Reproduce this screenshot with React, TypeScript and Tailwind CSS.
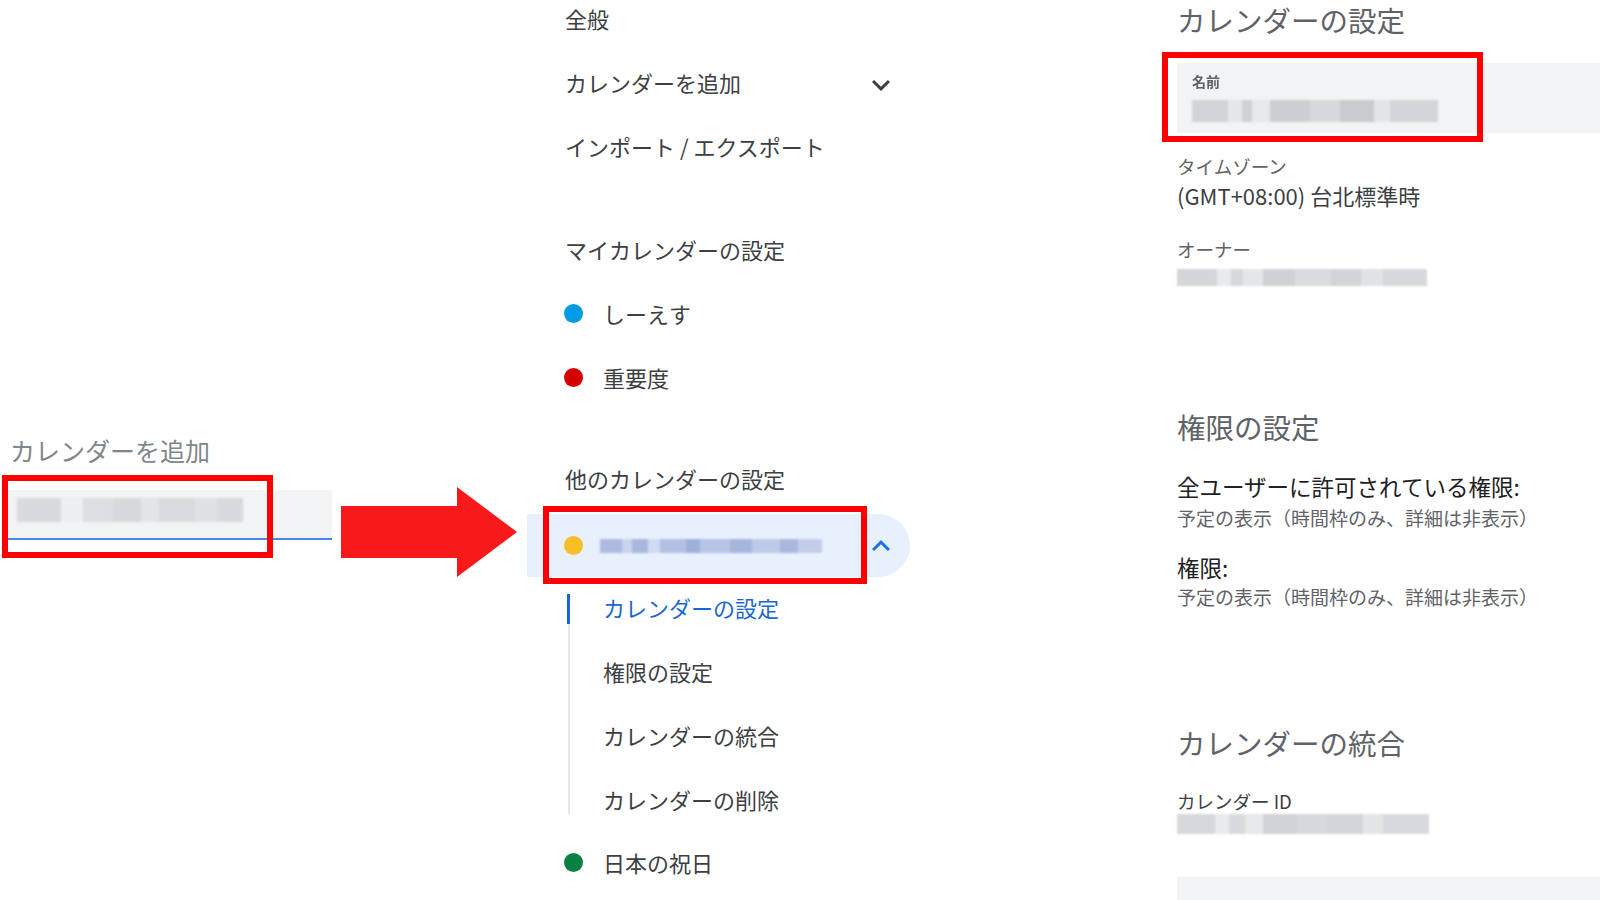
import React from "react";

type Seg = [number, string];

const Mosaic = ({ segs, h, className = "" }: { segs: Seg[]; h: number; className?: string }) => (
  <div className={"flex blur-[1px] " + className}>
    {segs.map(([w, c], i) => (
      <div key={i} style={{ width: w, height: h, background: c }} />
    ))}
  </div>
);

const ChevronDown = ({ color }: { color: string }) => (
  <svg width="36" height="36" viewBox="0 0 24 24">
    <path d="M16.59 8.59L12 13.17 7.41 8.59 6 10l6 6 6-6z" fill={color} />
  </svg>
);

const ChevronUp = ({ color }: { color: string }) => (
  <svg width="36" height="36" viewBox="0 0 24 24">
    <path d="M12 8l-6 6 1.41 1.41L12 10.83l4.59 4.58L18 14z" fill={color} />
  </svg>
);

const Row = ({ children, className = "" }: { children: React.ReactNode; className?: string }) => (
  <div className={"h-[64px] flex items-center shrink-0 " + className}>{children}</div>
);

const DotRow = ({ color, label, className = "" }: { color: string; label: string; className?: string }) => (
  <Row className={"pl-[37px] gap-[20px] " + className}>
    <div className={"w-[19px] h-[19px] rounded-full " + color} />
    <span>{label}</span>
  </Row>
);

export default function App() {
  return (
    <div className="w-[1600px] h-[900px] bg-white flex overflow-hidden font-['Noto_Sans_CJK_JP','Noto_Sans',sans-serif]">
      {/* Left: add calendar field */}
      <div className="w-[332px] shrink-0 pt-[434px]">
        <div className="pl-[10px] text-[25px] leading-[32px] text-[#80868b]">カレンダーを追加</div>
        <div className="relative ml-[7px] mt-[24px] w-[325px] h-[50px] bg-[#f1f3f4] border-b-2 border-[#4a86e8] pt-[8px] pl-[10px]">
          <Mosaic
            h={24}
            segs={[
              [44, "#d8dadd"],
              [22, "#eceef0"],
              [30, "#dcdee1"],
              [28, "#d6d8db"],
              [18, "#e2e4e6"],
              [36, "#d9dbde"],
              [22, "#dfe1e3"],
              [26, "#d8dadd"],
            ]}
          />
          <div className="absolute left-[-5px] top-[-15px] w-[271px] h-[83px] border-[6px] border-[#ff0000]" />
        </div>
      </div>

      {/* Arrow */}
      <div className="ml-[9px] mt-[487px] shrink-0 self-start">
        <svg width="176" height="90" viewBox="0 0 176 90">
          <polygon points="0,19 116,19 116,0 176,45 116,90 116,71 0,71" fill="#f81a1a" />
        </svg>
      </div>

      {/* Nav */}
      <div className="ml-[10px] w-[383px] shrink-0 -mt-[14px] flex flex-col text-[22px] leading-[30px] text-[#3c4043]">
        <Row className="pl-[38px]">全般</Row>
        <Row className="pl-[38px] justify-between pr-[11px]">
          <span>カレンダーを追加</span>
          <div className="mt-[5px]">
            <ChevronDown color="#3c4043" />
          </div>
        </Row>
        <Row className="pl-[38px]">インポート / エクスポート</Row>

        <Row className="pl-[38px] mt-[39px]">マイカレンダーの設定</Row>
        <DotRow color="bg-[#039be5]" label="しーえす" />
        <DotRow color="bg-[#d50000]" label="重要度" />

        <Row className="pl-[38px] mt-[37px]">他のカレンダーの設定</Row>
        <div className="relative mt-[4px] h-[63px] shrink-0 bg-[#e8f0fe] rounded-r-full flex items-center pl-[37px] pr-[11px]">
          <div className="w-[19px] h-[19px] rounded-full bg-[#f6bf26] shrink-0" />
          <Mosaic
            className="ml-[17px]"
            h={14}
            segs={[
              [22, "#aebbe0"],
              [10, "#c9d3ee"],
              [16, "#a9b7de"],
              [12, "#d2daf1"],
              [26, "#b3c0e3"],
              [14, "#9fb0da"],
              [30, "#b8c4e5"],
              [22, "#a6b5dd"],
              [28, "#bfcae8"],
              [18, "#aab8df"],
              [24, "#c3cdea"],
            ]}
          />
          <div className="ml-auto">
            <ChevronUp color="#1a73e8" />
          </div>
          <div className="absolute left-[16px] top-[-8px] w-[324px] h-[78px] border-[6px] border-[#ff0000]" />
        </div>

        <div className="flex shrink-0 -mt-[2px]">
          <div className="w-[40px] shrink-0" />
          <div className="flex flex-col pt-[19px] pb-[17px] w-[3px] shrink-0">
            <div className="h-[30px] w-[3px] bg-[#1967d2]" />
            <div className="flex-1 w-[2px] ml-[1px] bg-[#e3e5e8]" />
          </div>
          <div className="flex flex-col pl-[33px]">
            <Row className="text-[#1967d2]">カレンダーの設定</Row>
            <Row>権限の設定</Row>
            <Row>カレンダーの統合</Row>
            <Row>カレンダーの削除</Row>
          </div>
        </div>
        <DotRow color="bg-[#0b8043]" label="日本の祝日" className="-mt-[1px]" />
      </div>

      {/* Right: settings */}
      <div className="ml-[267px] w-[423px] shrink-0 flex flex-col -mt-[2px]">
        <div className="h-[44px] leading-[44px] text-[28.5px] text-[#5f6368]">カレンダーの設定</div>
        <div className="relative mt-[21px] h-[70px] bg-[#f1f3f4] pl-[15px] pt-[7px] shrink-0">
          <div className="text-[14px] leading-[22px] text-[#5f6368] font-bold blur-[0.6px]">名前</div>
          <Mosaic
            className="mt-[8px]"
            h={22}
            segs={[
              [36, "#d2d4d7"],
              [14, "#e4e6e8"],
              [10, "#cfd1d4"],
              [18, "#e6e8ea"],
              [40, "#cdd0d3"],
              [30, "#d6d8db"],
              [34, "#c9cbce"],
              [16, "#e2e4e6"],
              [48, "#d3d5d8"],
            ]}
          />
          <div className="absolute left-[-15px] top-[-11px] w-[321px] h-[90px] border-[6px] border-[#ff0000]" />
        </div>

        <div className="mt-[21px] text-[18.5px] leading-[24px] text-[#5f6368]">タイムゾーン</div>
        <div className="mt-[3px] text-[22px] leading-[28px] text-[#3c4043]">(GMT+08:00) 台北標準時</div>

        <div className="mt-[28px] text-[18.5px] leading-[24px] text-[#5f6368]">オーナー</div>
        <Mosaic
          className="mt-[8px]"
          h={17}
          segs={[
            [40, "#d4d6d9"],
            [14, "#e8eaec"],
            [12, "#d6d8db"],
            [20, "#e4e6e8"],
            [32, "#cfd1d4"],
            [36, "#d9dbde"],
            [30, "#d2d4d7"],
            [22, "#e0e2e4"],
            [44, "#d6d8db"],
          ]}
        />

        <div className="mt-[119px] h-[44px] leading-[44px] text-[28.5px] text-[#5f6368]">権限の設定</div>
        <div className="mt-[22px] text-[22.5px] leading-[30px] text-[#202124]">全ユーザーに許可されている権限:</div>
        <div className="mt-[4px] text-[19px] leading-[26px] text-[#5f6368]">予定の表示（時間枠のみ、詳細は非表示）</div>
        <div className="mt-[21px] text-[22.5px] leading-[30px] text-[#202124]">権限:</div>
        <div className="mt-[2px] text-[19px] leading-[26px] text-[#5f6368]">予定の表示（時間枠のみ、詳細は非表示）</div>

        <div className="mt-[111px] h-[44px] leading-[44px] text-[28.5px] text-[#5f6368]">カレンダーの統合</div>
        <div className="mt-[24px] text-[18.5px] leading-[24px] text-[#3c4043]">カレンダー ID</div>
        <Mosaic
          className="mt-[1px]"
          h={20}
          segs={[
            [38, "#d6d8db"],
            [14, "#e8eaec"],
            [16, "#d8dadd"],
            [18, "#e6e8ea"],
            [34, "#d0d2d5"],
            [30, "#d6d8db"],
            [36, "#d3d5d8"],
            [20, "#e2e4e6"],
            [46, "#d8dadd"],
          ]}
        />
        <div className="mt-[43px] h-[40px] bg-[#f1f3f4] shrink-0" />
      </div>
    </div>
  );
}
